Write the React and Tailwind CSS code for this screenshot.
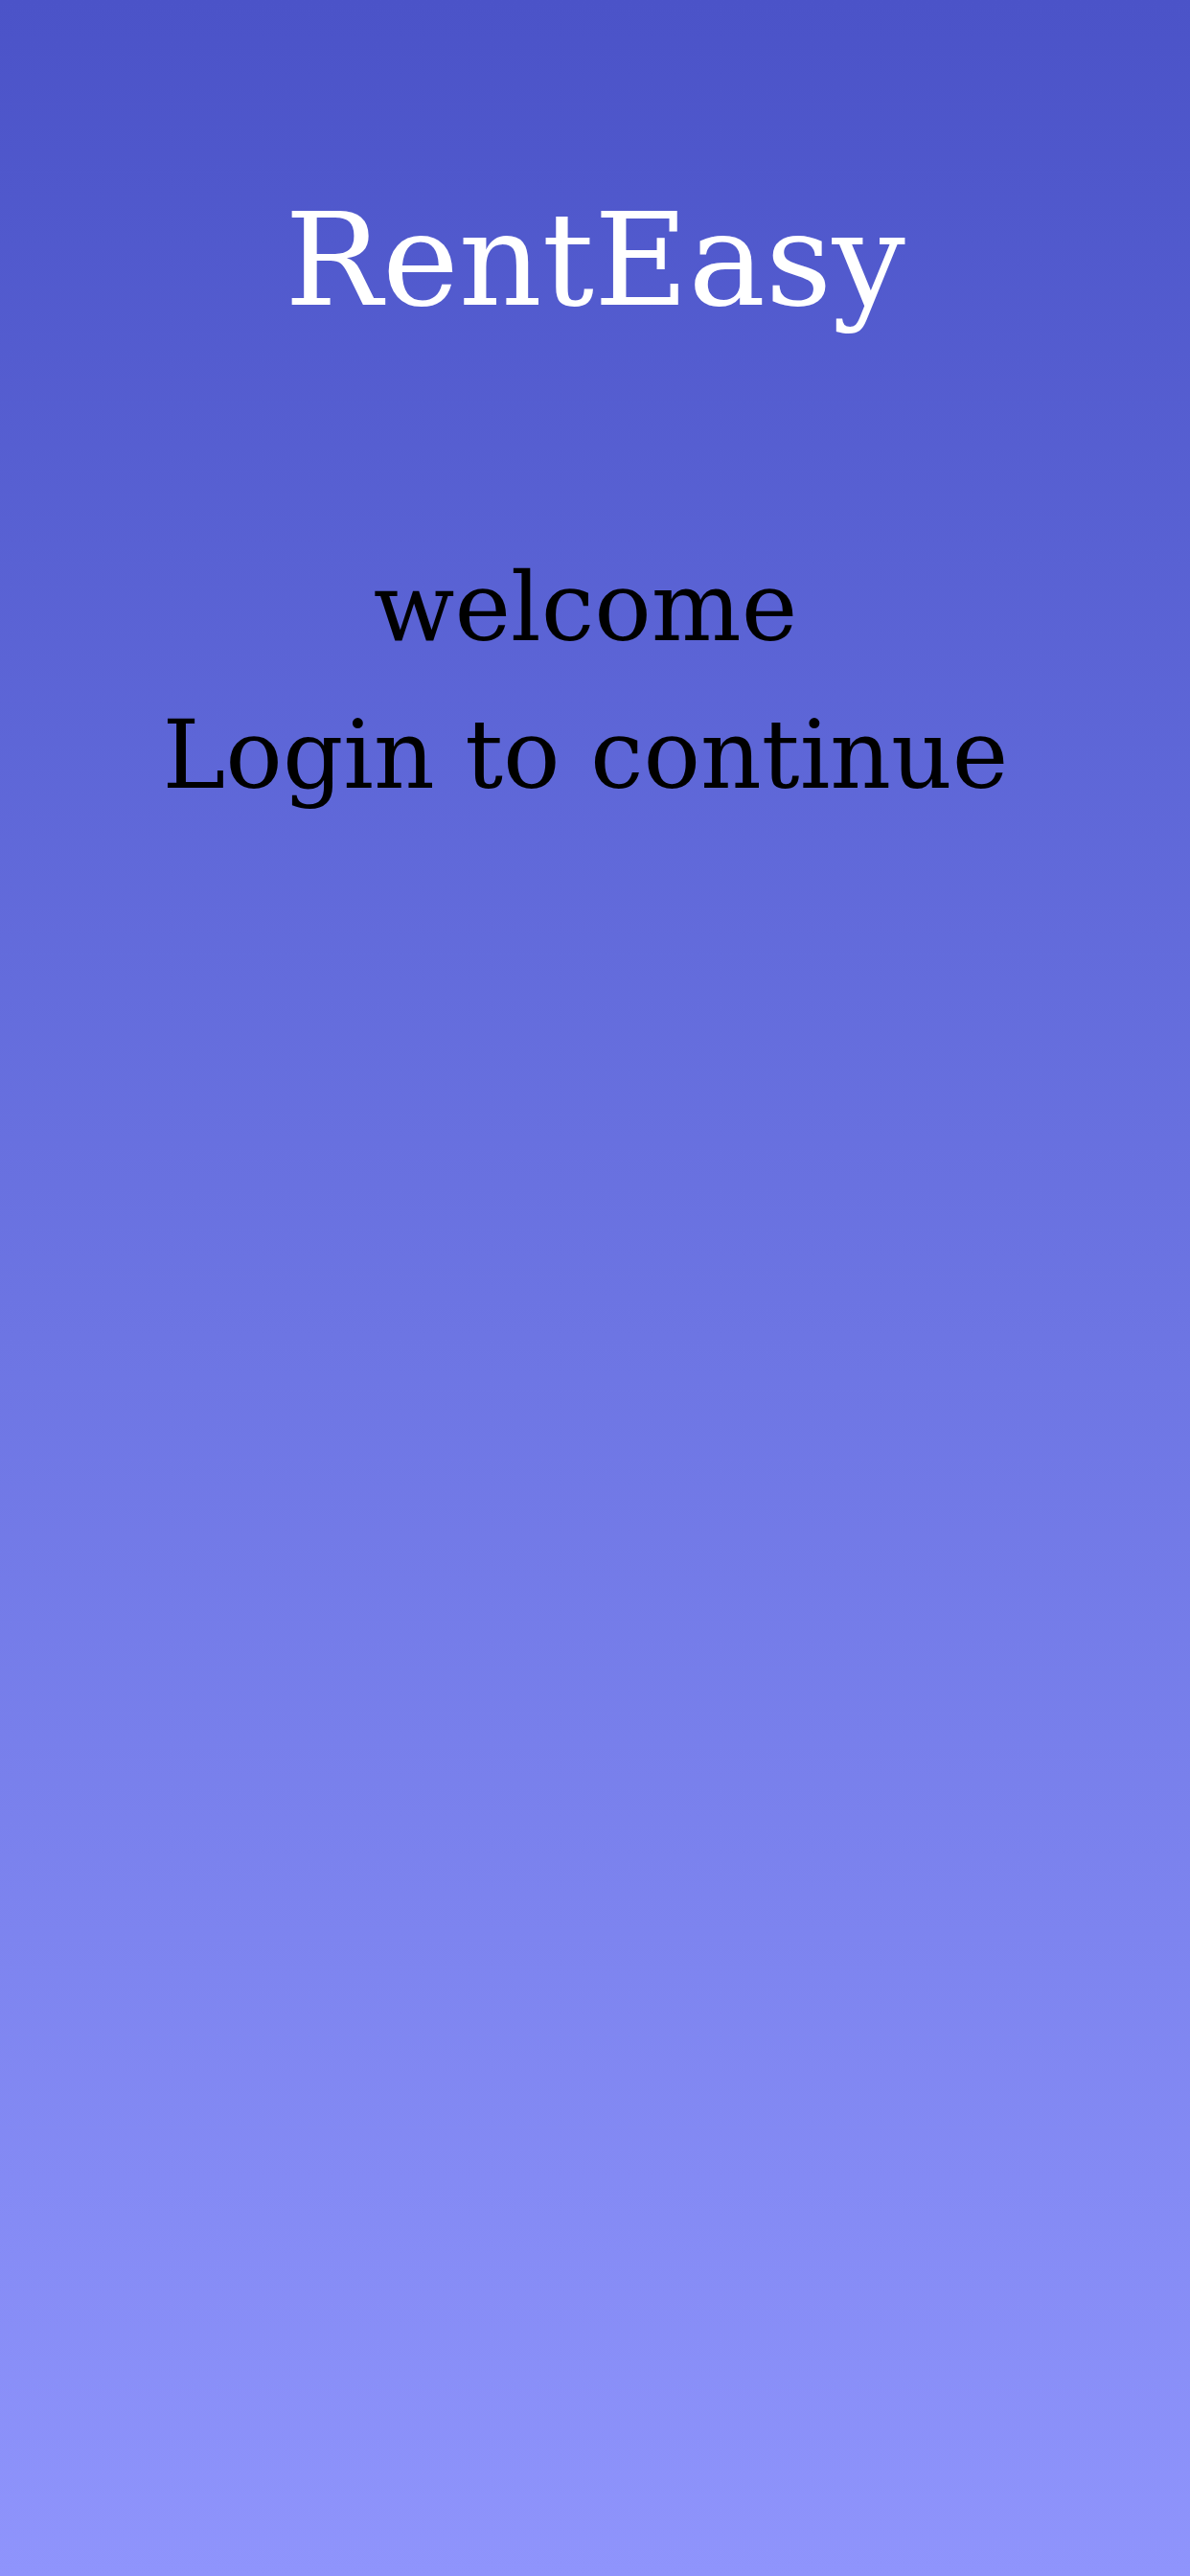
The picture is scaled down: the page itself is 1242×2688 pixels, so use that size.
export default function App() {
  return (
    <div
      className="w-[1242px] h-[2688px] flex flex-col items-center bg-gradient-to-b from-[#4b53c8] to-[#8f94fc]"
      style={{ fontFamily: '"DejaVu Serif", "Liberation Serif", serif' }}
    >
      <h1 className="mt-[182px] text-white text-[135px] leading-[180px]">RentEasy</h1>
      <div className="mt-[195px] pr-[20px] flex flex-col items-center text-black text-[99px] leading-[154px]">
        <p>welcome</p>
        <p>Login to continue</p>
      </div>
    </div>
  );
}
